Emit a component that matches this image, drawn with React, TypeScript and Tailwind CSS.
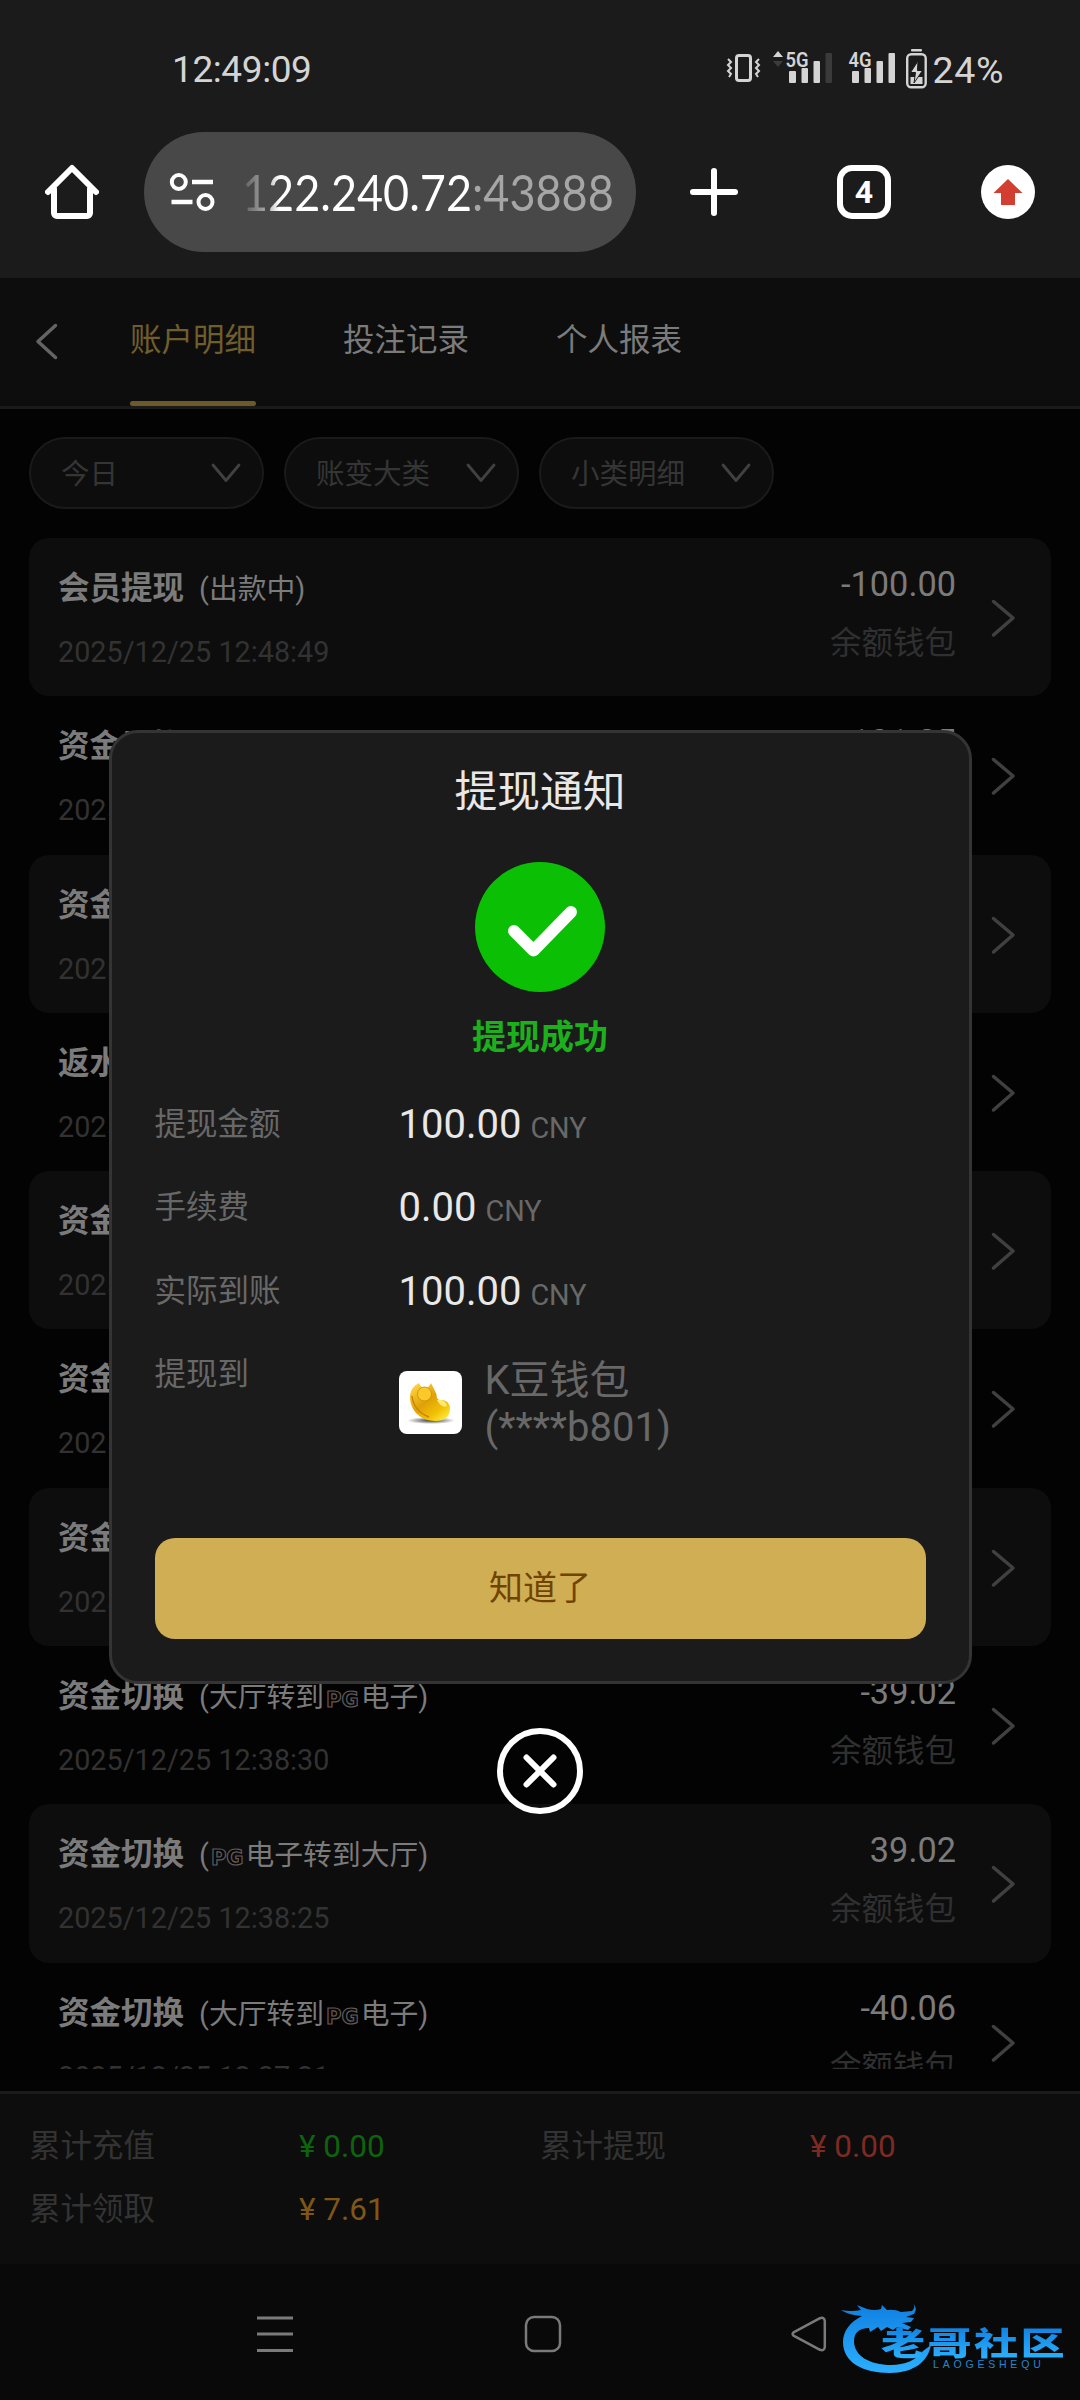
import type { ReactNode } from "react";

const Pg = () => (
  <span className="mx-[2px] font-['DejaVu_Sans'] text-[21px] leading-none font-bold text-[#060606] [-webkit-text-stroke:1.2px_#625a5a]">
    PG
  </span>
);

type RecordItem = {
  title: string;
  note?: ReactNode;
  time: string;
  amount: string;
};

const records: RecordItem[] = [
  { title: "会员提现", note: "出款中", time: "2025/12/25 12:48:49", amount: "-100.00" },
  { title: "资金切换", note: <><Pg />电子转到大厅</>, time: "2025/12/25 12:46:20", amount: "101.25" },
  { title: "资金切换", note: <>大厅转到<Pg />电子</>, time: "2025/12/25 12:42:12", amount: "-7.61" },
  { title: "返水", time: "2025/12/25 12:41:50", amount: "7.61" },
  { title: "资金切换", note: <><Pg />电子转到大厅</>, time: "2025/12/25 12:40:31", amount: "93.64" },
  { title: "资金切换", note: <>大厅转到<Pg />电子</>, time: "2025/12/25 12:39:44", amount: "-39.02" },
  { title: "资金切换", note: <><Pg />电子转到大厅</>, time: "2025/12/25 12:38:58", amount: "39.02" },
  { title: "资金切换", note: <>大厅转到<Pg />电子</>, time: "2025/12/25 12:38:30", amount: "-39.02" },
  { title: "资金切换", note: <><Pg />电子转到大厅</>, time: "2025/12/25 12:38:25", amount: "39.02" },
  { title: "资金切换", note: <>大厅转到<Pg />电子</>, time: "2025/12/25 12:37:21", amount: "-40.06" },
];

const tabs = ["账户明细", "投注记录", "个人报表"];
const filters = ["今日", "账变大类", "小类明细"];

function StatusBar() {
  return (
    <div className="flex h-[132px] items-start justify-between pl-[172px] pr-[76px] text-[#d4d4d4]">
      <span className="mt-[45px] text-[37px] leading-[50px] tracking-[-0.4px]">12:49:09</span>
      <div className="mt-[44px] flex items-start">
        <svg width="207" height="46" viewBox="0 0 207 46" className="mr-[5px]" fill="none">
          <rect x="15.500" y="11.500" width="14" height="25" rx="2.500" stroke="#d4d4d4" strokeWidth="3" />
          <path
            d="M7 15l3 3-3 3 3 3-3 3 3 3-2 3M38 15l-3 3 3 3-3 3 3 3-3 3 2 3"
            stroke="#d4d4d4"
            strokeWidth="2"
          />
          <path d="M52 13l5-6 5 6z" fill="#d4d4d4" />
          <path d="M52 17l5 6 5-6z" fill="#3c3c3c" />
          <text x="64.500" y="23" fontSize="21" fontWeight="600" textLength="23" lengthAdjust="spacingAndGlyphs" fill="#d4d4d4">5G</text>
          <g fill="#d4d4d4">
            <rect x="68" y="27" width="7" height="12" rx="1" />
            <rect x="80.500" y="24" width="6.500" height="15" rx="1" />
            <rect x="92.500" y="17" width="6.500" height="22" rx="1" />
          </g>
          <rect x="104.500" y="9" width="6.500" height="30" rx="1" fill="#3a3a3a" />
          <text x="127.500" y="23" fontSize="21" fontWeight="600" textLength="23" lengthAdjust="spacingAndGlyphs" fill="#d4d4d4">4G</text>
          <g fill="#d4d4d4">
            <rect x="131" y="27" width="7" height="12" rx="1" />
            <rect x="143.500" y="24" width="6.500" height="15" rx="1" />
            <rect x="155.500" y="17" width="6.500" height="22" rx="1" />
            <rect x="167.500" y="9" width="6.500" height="30" rx="1" />
          </g>
          <rect x="190" y="5" width="11" height="2.500" rx="1" fill="#d4d4d4" />
          <rect x="186.200" y="10.200" width="18.500" height="33" rx="4" stroke="#d4d4d4" strokeWidth="2.400" />
          <path d="M189.500 33h12v7h-12z" fill="#d4d4d4" />
          <path d="M197 17l-7.500 11.500h5L193 39l8.500-12.500h-5z" fill="#d4d4d4" stroke="#1b1b1b" strokeWidth="1" />
        </svg>
        <span className="mt-[1px] text-[37.5px] leading-[50px] tracking-[0.6px]">24%</span>
      </div>
    </div>
  );
}

function BrowserBar() {
  return (
    <div className="flex h-[120px] items-center pl-[45px]">
      <svg width="54" height="56" viewBox="0 0 54 56" fill="none" stroke="#fff" strokeWidth="6" strokeLinecap="round" strokeLinejoin="round">
        <path d="M3 28L27 4l24 24M9 25v24a3 3 0 0 0 3 3h30a3 3 0 0 0 3-3V25" />
      </svg>
      <div className="ml-[45px] flex h-[120px] w-[492px] items-center overflow-hidden rounded-full bg-[#484848] pl-[25px]">
        <svg width="46" height="42" viewBox="0 0 46 42" className="shrink-0" fill="none" stroke="#fff">
          <circle cx="9.800" cy="11" r="7" strokeWidth="4" />
          <path d="M23 11h21" strokeWidth="4.500" />
          <path d="M2.500 31h21" strokeWidth="4.500" />
          <circle cx="36.500" cy="31" r="7" strokeWidth="4" />
        </svg>
        <span className="ml-[27px] inline-block origin-left scale-x-[0.9] whitespace-nowrap font-['Lato',sans-serif] text-[50px] leading-[60px]">
          <span className="bg-gradient-to-r from-[#5a5a5a] via-[#a5a5a5] via-10% to-white to-16% bg-clip-text text-transparent">
            122.240.72
          </span>
          <span className="text-[#a6a6a6]">:43888</span>
        </span>
      </div>
      <svg width="50" height="50" viewBox="0 0 50 50" className="ml-[53px]" stroke="#fff" strokeWidth="6" strokeLinecap="round">
        <path d="M4 25h42M25 4v42" />
      </svg>
      <div className="ml-[98px] flex h-[54px] w-[54px] items-center justify-center rounded-[15px] border-[6px] border-white text-[32px] leading-none font-bold text-white">
        4
      </div>
      <svg width="54" height="54" viewBox="0 0 54 54" className="ml-[90px]">
        <circle cx="27" cy="27" r="27" fill="#fff" />
        <path d="M27 14L41.500 28H34v12H20V28h-7.500z" fill="#d23f31" />
      </svg>
    </div>
  );
}

function PageTabs() {
  return (
    <div className="flex h-[131px] shrink-0 border-b-[3px] border-[#1a1a1a] bg-[#0d0d0d]">
      <svg width="24" height="38" viewBox="0 0 24 38" className="mt-[44px] ml-[35px]" fill="none" stroke="#646464" strokeWidth="3.500" strokeLinecap="round" strokeLinejoin="round">
        <path d="M20.500 3.500L3 19.500l17.500 16" />
      </svg>
      <div className="ml-[71px] flex gap-[87px] text-[31.5px] leading-[40px]">
        {tabs.map((tab, i) => (
          <div
            key={tab}
            className={
              i === 0
                ? "flex flex-col justify-between pt-[43px] text-[#705d2c]"
                : "pt-[43px] text-[#7b7b7b]"
            }
          >
            {tab}
            {i === 0 && <div className="h-[5px] rounded-full bg-[#6d5a2b]" />}
          </div>
        ))}
      </div>
    </div>
  );
}

function Filters() {
  return (
    <div className="flex shrink-0 gap-5 px-[29px] pt-[28px]">
      {filters.map((label) => (
        <div
          key={label}
          className="flex h-[72px] w-[235px] items-center justify-between rounded-full border-[2px] border-[#1a1a1a] bg-[#0d0d0d] pr-[21px] pl-[30px] text-[28.5px] text-[#353535]"
        >
          <span className="pt-[4px]">{label}</span>
          <svg width="30" height="20" viewBox="0 0 30 20" fill="none" stroke="#414141" strokeWidth="2.800" strokeLinecap="round" strokeLinejoin="round">
            <path d="M2 2l13 15.500L28 2" />
          </svg>
        </div>
      ))}
    </div>
  );
}

function RecordRow({ item, striped }: { item: RecordItem; striped: boolean }) {
  return (
    <div className={`flex h-[158.3px] shrink-0 rounded-[20px] pl-[29px] ${striped ? "bg-[#0d0d0d]" : ""}`}>
      <div className="flex-1 pt-[31px]">
        <div className="flex h-[40px] items-center text-[#7b7b7b]">
          <span className="text-[31.5px] leading-[40px] font-bold">{item.title}</span>
          {item.note && <span className="ml-[15px] text-[28.8px] leading-[40px]">({item.note})</span>}
        </div>
        <div className="mt-[23px] text-[28.8px] leading-[40px] text-[#323232]">{item.time}</div>
      </div>
      <div className="pt-[24.5px] text-right">
        <div className="text-[34.3px] leading-[42px] text-[#7b7b7b]">{item.amount}</div>
        <div className="mt-[19px] text-[31.5px] leading-[40px] text-[#303030]">余额钱包</div>
      </div>
      <svg width="26" height="40" viewBox="0 0 26 40" className="mt-[60px] mr-[35px] ml-[34px]" fill="none" stroke="#404040" strokeWidth="3.500" strokeLinecap="round" strokeLinejoin="round">
        <path d="M3.500 3.500L23 20 3.500 37" />
      </svg>
    </div>
  );
}

function SummaryBar() {
  return (
    <div className="grid h-[173px] shrink-0 grid-cols-[270px_241px_270px_1fr] content-start gap-y-[23px] border-t-[3px] border-[#1b1b1b] bg-[#0d0d0d] pt-[33px] pl-[29px] text-[31.5px] leading-[40px] text-[#333333]">
      <span>累计充值</span>
      <span className="text-[#0e630e]">¥ 0.00</span>
      <span>累计提现</span>
      <span className="text-[#7d2a22]">¥ 0.00</span>
      <span>累计领取</span>
      <span className="text-[#7f5715]">¥ 7.61</span>
    </div>
  );
}

function Watermark() {
  return (
    <div className="absolute top-[2294px] left-[840px] h-[84px] w-[230px]">
      <svg width="230" height="84" viewBox="0 0 230 84" className="absolute inset-0">
        <defs>
          <linearGradient id="dragon" x1="0" y1="0" x2="0" y2="1">
            <stop offset="0" stopColor="#0f7fe0" />
            <stop offset="1" stopColor="#2bb0ff" />
          </linearGradient>
        </defs>
        <path
          fill="url(#dragon)"
          d="M1 16q10 2 20 0l-4-5 10 4q8 2 14 0l1-4 5 5q8-1 14 2l11-1q4-4 1-8 5 6 1 11l-8 3 8 1-3 4-9 1 9 4-3 3-11-3-4 3-6-3-6 4-3-4-8 5-1-4C19 34 14 39 14 47c0 15 16 24 37 24 14 0 25-5 32-14l8-6C88 68 73 79 50 79 22 79 3 68 3 48 3 37 10 28 22 22q-14-1-21-6z"
        />
      </svg>
      <div className="absolute top-[27px] left-[41px] origin-left scale-x-[1.38] bg-gradient-to-b from-[#0c78dc] to-[#2eb4ff] bg-clip-text font-['Noto_Sans_CJK_SC',sans-serif] text-[32px] leading-[40px] font-black tracking-[1.7px] whitespace-nowrap text-transparent">
        老哥社区
      </div>
      <div className="absolute top-[64px] left-[93px] font-['Liberation_Sans',sans-serif] text-[10.5px] leading-[12px] tracking-[3.8px] text-[#2387d0]">
        LAOGESHEQU
      </div>
    </div>
  );
}

function SystemNav() {
  return (
    <div className="flex h-[136px] shrink-0 items-start bg-[#090909] pt-[51px]">
      <svg width="38" height="38" viewBox="0 0 38 38" className="ml-[256px]" stroke="#7a7a7a" strokeWidth="3">
        <path d="M1 3h36M1 19h36M1 35.500h36" />
      </svg>
      <svg width="38" height="38" viewBox="0 0 38 38" className="ml-[230px]" fill="none" stroke="#7a7a7a" strokeWidth="2.500">
        <rect x="2" y="2" width="34" height="34" rx="8" />
      </svg>
      <svg width="38" height="38" viewBox="0 0 38 38" className="ml-[228px]" fill="none" stroke="#7a7a7a" strokeWidth="2.500" strokeLinejoin="round">
        <path d="M3.500 17.300L30 3.200q4.500-1.500 4.800 3v25.600q-.3 4.500-4.800 3L3.500 20.700q-1.800-1.700 0-3.400z" />
      </svg>
    </div>
  );
}

function Bean() {
  return (
    <svg width="63" height="63" viewBox="0 0 63 63" className="rounded-[8px] bg-white">
      <defs>
        <linearGradient id="bean" x1="0.1" y1="0" x2="0.9" y2="1">
          <stop offset="0" stopColor="#ffd84a" />
          <stop offset="0.45" stopColor="#e0a008" />
          <stop offset="0.75" stopColor="#f2c205" />
          <stop offset="1" stopColor="#fff04a" />
        </linearGradient>
        <radialGradient id="beanShadow">
          <stop offset="0" stopColor="#222" stopOpacity="0.9" />
          <stop offset="1" stopColor="#222" stopOpacity="0" />
        </radialGradient>
      </defs>
      <ellipse cx="32" cy="49.500" rx="24" ry="3.500" fill="url(#beanShadow)" />
      <path
        d="M20 12q2 5 6 5t6-5l3 6q3 5 3 9l2 2q10-1 11 8 0 13-15 13C20 50 10 37 11 24q1-8 9-12z"
        fill="url(#bean)"
      />
      <circle cx="25.500" cy="23" r="7" fill="#fbc92a" stroke="#cf8b00" strokeWidth="0.800" />
      <path d="M38 29c5-1 9 1 10 6-3 2-7 0-10-6z" fill="#ffe873" />
      <path d="M13 25c1 9 7 17 17 21" stroke="#c98500" strokeWidth="1.500" fill="none" />
    </svg>
  );
}

function DetailRow({ label, value }: { label: string; value: string }) {
  return (
    <div className="flex h-[83.500px] items-start">
      <span className="w-[244px] text-[31.5px] leading-[42px] text-[#686868]">{label}</span>
      <span className="text-[40px] leading-[42px] text-[#e8e8e8]">
        {value} <span className="-ml-[1px] text-[28.8px] text-[#686868]">CNY</span>
      </span>
    </div>
  );
}

function WithdrawModal() {
  return (
    <div className="absolute inset-x-0 top-[730px] flex flex-col items-center">
      <div className="flex h-[954px] w-[863px] flex-col rounded-[29px] border-[3px] border-[#343434] bg-[#1b1b1b] px-[43px]">
        <h2 className="mt-[32px] text-center text-[42.800px] leading-[54px] text-[#e8e8e8]">提现通知</h2>
        <svg width="130" height="130" viewBox="0 0 130 130" className="mt-[43px] self-center">
          <circle cx="65" cy="65" r="65" fill="#0abf04" />
          <path d="M39 69l19.500 19.500L96 50" fill="none" stroke="#fff" strokeWidth="12" strokeLinecap="round" strokeLinejoin="round" />
        </svg>
        <p className="mt-[23px] text-center text-[34px] leading-[44px] font-bold text-[#1cb01c]">提现成功</p>
        <div className="mt-[44.5px]">
          <DetailRow label="提现金额" value="100.00" />
          <DetailRow label="手续费" value="0.00" />
          <DetailRow label="实际到账" value="100.00" />
          <div className="flex items-start">
            <span className="w-[244px] text-[31.5px] leading-[42px] text-[#686868]">提现到</span>
            <div className="mt-[-1px] flex items-center">
              <Bean />
              <div className="ml-[23px] pt-[4px] text-[40px] leading-[47px] text-[#686868]">
                <p>K豆钱包</p>
                <p>(****b801)</p>
              </div>
            </div>
          </div>
        </div>
        <button className="mt-auto mb-[42px] h-[101px] rounded-[20px] bg-[#d0ae54] text-[34px] text-[#704400]">知道了</button>
      </div>
      <svg width="86" height="86" viewBox="0 0 86 86" className="mt-[44px]" fill="none" stroke="#fff" strokeWidth="6" strokeLinecap="round">
        <circle cx="43" cy="43" r="40" />
        <path d="M29.500 29.500l27 27M56.500 29.500l-27 27" />
      </svg>
    </div>
  );
}

export default function App() {
  return (
    <div className="relative flex h-[2400px] w-[1080px] flex-col overflow-hidden bg-[#030303] font-['Roboto','Noto_Sans_CJK_SC',sans-serif]">
      <header className="h-[278px] shrink-0 bg-[#1b1b1b]">
        <StatusBar />
        <BrowserBar />
      </header>
      <PageTabs />
      <Filters />
      <main className="mx-[29px] mt-[29px] mb-[22px] flex min-h-0 flex-1 flex-col overflow-hidden">
        {records.map((item, i) => (
          <RecordRow key={i} item={item} striped={i % 2 === 0} />
        ))}
      </main>
      <SummaryBar />
      <SystemNav />
      <WithdrawModal />
      <Watermark />
    </div>
  );
}
